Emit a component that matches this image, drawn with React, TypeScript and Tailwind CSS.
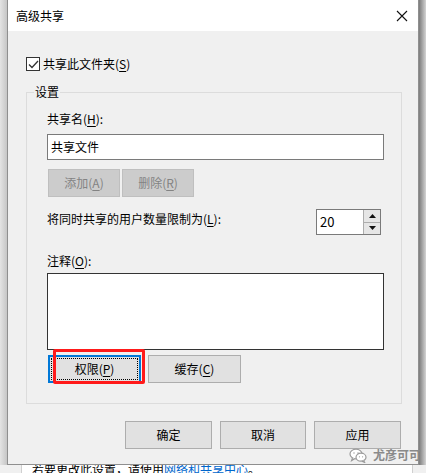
import React from 'react';

const font = "font-['Noto_Sans_CJK_SC',sans-serif]";

// mnemonic letter, underlined like Windows accelerators
function U({ children }: { children: React.ReactNode }) {
  return <span className="underline underline-offset-2">{children}</span>;
}

function WinButton({
  children,
  width,
  disabled,
  focused,
}: {
  children: React.ReactNode;
  width: string;
  disabled?: boolean;
  focused?: boolean;
}) {
  return (
    <div
      className={`relative flex h-[28px] items-center justify-center text-[12px] leading-[16px] ${width} ${
        disabled
          ? 'border border-[#bfbfbf] bg-[#cccccc] text-[#838383]'
          : focused
          ? 'border-2 border-[#0078d7] bg-[#e1e1e1] text-black'
          : 'border border-[#adadad] bg-[#e1e1e1] text-black'
      }`}
    >
      {focused && (
        <span className="absolute inset-[1px] border border-dotted border-black" />
      )}
      <span className="relative">{children}</span>
    </div>
  );
}

function WeChatMark() {
  return (
    <svg width="18" height="15" viewBox="0 0 18 15" fill="none" stroke="#9a9a9a" strokeWidth="1.2">
      <ellipse cx="7" cy="6" rx="6" ry="4.8" fill="#fff" />
      <path d="M3.5 10 L2.6 12.6 L5.6 10.8" fill="#fff" />
      <ellipse cx="12" cy="9.2" rx="5" ry="4" fill="#fff" />
      <path d="M14.6 12.6 L15.6 14.4 L13 13.1" fill="#fff" />
      <circle cx="5" cy="5" r="0.7" fill="#9a9a9a" stroke="none" />
      <circle cx="9" cy="5" r="0.7" fill="#9a9a9a" stroke="none" />
      <circle cx="10.5" cy="8.8" r="0.6" fill="#9a9a9a" stroke="none" />
      <circle cx="13.6" cy="8.8" r="0.6" fill="#9a9a9a" stroke="none" />
    </svg>
  );
}

export default function App() {
  return (
    <div className={`relative flex h-[473px] w-[426px] flex-col overflow-hidden bg-white text-black ${font}`}>
      <div className="flex h-[465px]">
        {/* window behind, left edge */}
        <div className="w-[7px] bg-gradient-to-r from-[#e4e4e4] to-[#c6c6c6]" />

        {/* dialog */}
        <div className="flex w-[412px] flex-col border-x border-b border-[#8f8f8f] bg-[#f0f0f0]">
          {/* title bar */}
          <div className="flex h-[31px] items-center justify-between bg-white pl-[8px] pr-[8px]">
            <span className="text-[12px] leading-[16px]">高级共享</span>
            <svg width="12" height="12" viewBox="0 0 12 12" className="mr-[2px]" stroke="#111" strokeWidth="1.1">
              <path d="M1 1 L11 11 M11 1 L1 11" />
            </svg>
          </div>

          {/* checkbox */}
          <div className="ml-[18px] mt-[26px] flex h-[14px] items-center gap-[3px]">
            <div className="flex h-[14px] w-[14px] items-center justify-center border border-[#333] bg-white">
              <svg width="11" height="9" viewBox="0 0 11 9" fill="none" stroke="#333" strokeWidth="1.3">
                <path d="M1 4.5 L4 7.5 L10 1" />
              </svg>
            </div>
            <span className="text-[12px] leading-[16px]">
              共享此文件夹(<U>S</U>)
            </span>
          </div>

          {/* group box */}
          <div className="relative ml-[18px] mt-[21px] flex h-[312px] w-[376px] flex-col border border-[#dcdcdc]">
            <span className="absolute left-[7px] top-[-9px] bg-[#f0f0f0] px-[1px] text-[12px] leading-[16px]">
              设置
            </span>

            <div className="ml-[20px] mt-[18px] text-[12px] leading-[16px]">
              共享名(<U>H</U>):
            </div>
            <div className="ml-[20px] mt-[7px] flex h-[26px] w-[337px] items-center border border-[#7a7a7a] bg-white px-[3px] text-[12px] leading-[16px]">
              共享文件
            </div>

            <div className="ml-[21px] mt-[9px] flex gap-[2px]">
              <WinButton width="w-[72px]" disabled>
                添加(<U>A</U>)
              </WinButton>
              <WinButton width="w-[72px]" disabled>
                删除(<U>R</U>)
              </WinButton>
            </div>

            <div className="ml-[20px] mt-[12px] flex h-[26px] w-[334px] items-start justify-between">
              <span className="mt-[2px] text-[12px] leading-[16px]">
                将同时共享的用户数量限制为(<U>L</U>):
              </span>
              <div className="flex h-[26px] w-[65px] border border-[#7a7a7a] bg-white">
                <div className="flex flex-1 items-center pl-[3px] text-[13px] leading-[16px]">20</div>
                <div className="flex w-[17px] flex-col border-l border-[#adadad]">
                  <div className="flex flex-1 items-center justify-center border-b border-[#adadad] bg-[#e6e6e6]">
                    <svg width="7" height="4" viewBox="0 0 7 4">
                      <path d="M0 4 L3.5 0 L7 4 Z" fill="#111" />
                    </svg>
                  </div>
                  <div className="flex flex-1 items-center justify-center bg-[#e6e6e6]">
                    <svg width="7" height="4" viewBox="0 0 7 4">
                      <path d="M0 0 L7 0 L3.5 4 Z" fill="#111" />
                    </svg>
                  </div>
                </div>
              </div>
            </div>

            <div className="ml-[20px] mt-[18px] text-[12px] leading-[16px]">
              注释(<U>O</U>):
            </div>
            <div className="ml-[20px] mt-[4px] h-[77px] w-[337px] border border-[#333] bg-white" />

            <div className="ml-[21px] mt-[5px] flex gap-[7px]">
              <WinButton width="w-[93px]" focused>
                权限(<U>P</U>)
              </WinButton>
              <WinButton width="w-[93px]">
                缓存(<U>C</U>)
              </WinButton>
            </div>
          </div>

          {/* dialog buttons */}
          <div className="mr-[17px] mt-[17px] flex justify-end gap-[8px]">
            <WinButton width="w-[87px]">确定</WinButton>
            <WinButton width="w-[86px]">取消</WinButton>
            <WinButton width="w-[87px]">应用</WinButton>
          </div>
        </div>

        {/* window behind, right edge */}
        <div className="flex-1 bg-gradient-to-r from-[#7c7c7c] to-[#d4d4d4]" />
      </div>

      {/* window underneath, peeking out */}
      <div className="flex h-[8px] overflow-hidden">
        <div className="w-[22px] border-r border-[#d0d0d0] bg-[#f0f0f0]" />
        <div className="flex-1 overflow-hidden bg-white pl-[10px]">
          <div className="mt-[-4px] whitespace-nowrap text-[12px] leading-[16px]">
            若要更改此设置，请使用<span className="text-[#0066cc] underline">网络和共享中心</span>。
          </div>
        </div>
        <div className="w-[14px] border-l border-[#d0d0d0] bg-[#f0f0f0]" />
      </div>

      {/* red annotation */}
      <div className="absolute left-[53px] top-[349px] h-[35px] w-[92px] rounded-[2px] border-[3px] border-[#ff1a1a]" />

      {/* watermark */}
      <div className="absolute left-[349px] top-[447px] flex items-center gap-[6px]">
        <WeChatMark />
        <span className="text-[12px] font-bold leading-[16px] text-[#8a8a8a]">尤彦可可</span>
      </div>
    </div>
  );
}
